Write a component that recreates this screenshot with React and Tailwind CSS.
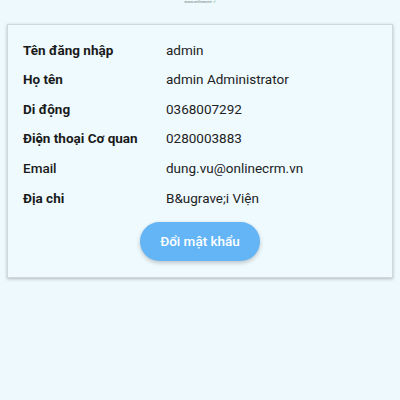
import React from 'react';

const rows = [
  ['Tên đăng nhập', 'admin', true],
  ['Họ tên', 'admin Administrator', true],
  ['Di động', '0368007292', true],
  ['Điện thoại Cơ quan', '0280003883', true],
  ['Email', 'dung.vu@onlinecrm.vn', false],
  ['Địa chi', 'B&ugrave;i Viện', true],
];

export default function App() {
  return (
    <div className="min-h-[400px] w-[400px] bg-[#eef9fd] font-['Roboto',sans-serif] text-[#212121] overflow-hidden">
      <div className="h-[24px] flex justify-center items-start">
        <span className="text-[4px] leading-none text-[#6b7b80]">
          www.onlinecrm <span className="text-[#4caf50]">✓</span>
        </span>
      </div>
      <div className="mx-[7px] bg-[#effaff] border border-[#cfd8dc] shadow-[0_1px_3px_rgba(0,0,0,0.25)] pt-[10px] pb-[16px] px-[15px]">
        <div className="flex flex-col">
          {rows.map(([label, value, bold]) => (
            <div key={label} className="flex h-[29.6px] items-center text-[13.5px]">
              <div className={bold ? 'w-[143px] font-bold text-[#1a1a1a]' : 'w-[143px] font-medium text-[#1a1a1a]'}>{label}</div>
              <div className="text-[#222]">{value}</div>
            </div>
          ))}
        </div>
        <div className="flex justify-center mt-[9px]">
          <button className="w-[120px] h-[39px] rounded-full bg-[#64b5f6] text-white text-[13.5px] font-medium shadow-[0_2px_4px_rgba(0,0,0,0.22)]">
            Đổi mật khẩu
          </button>
        </div>
      </div>
    </div>
  );
}
